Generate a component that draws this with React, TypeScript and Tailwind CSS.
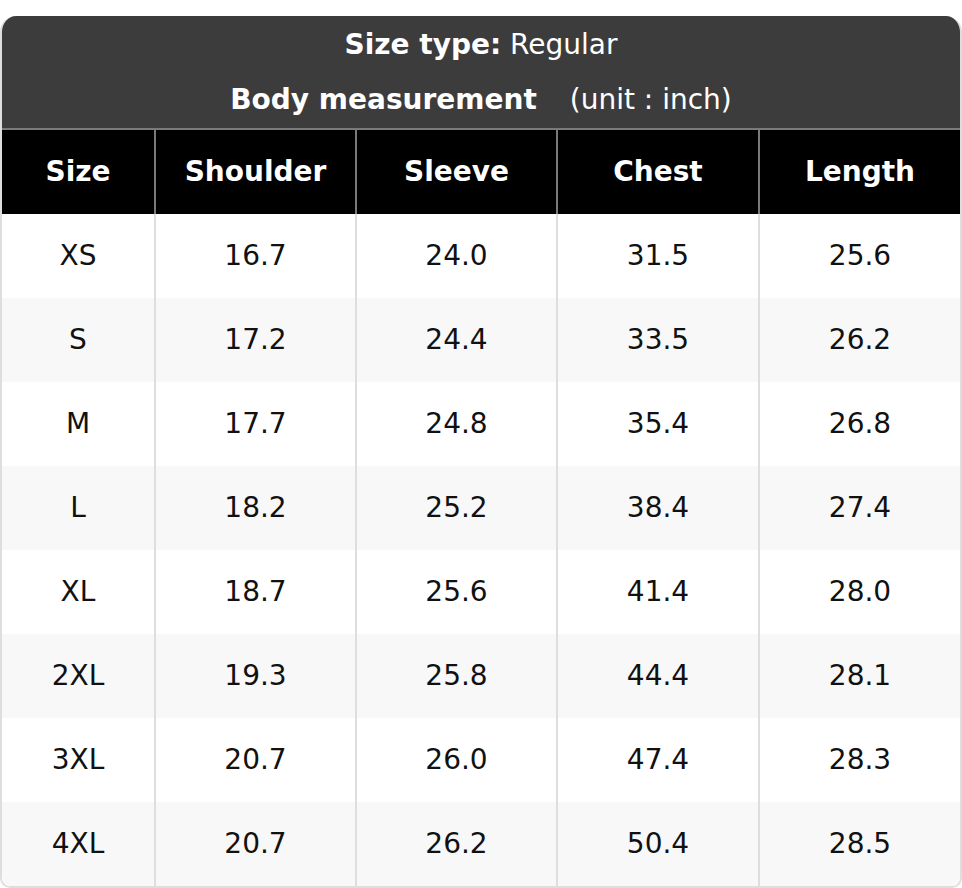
const columns = ['Size', 'Shoulder', 'Sleeve', 'Chest', 'Length'];

const rows = [
  ['XS', '16.7', '24.0', '31.5', '25.6'],
  ['S', '17.2', '24.4', '33.5', '26.2'],
  ['M', '17.7', '24.8', '35.4', '26.8'],
  ['L', '18.2', '25.2', '38.4', '27.4'],
  ['XL', '18.7', '25.6', '41.4', '28.0'],
  ['2XL', '19.3', '25.8', '44.4', '28.1'],
  ['3XL', '20.7', '26.0', '47.4', '28.3'],
  ['4XL', '20.7', '26.2', '50.4', '28.5'],
];

const gridCols = 'grid grid-cols-[152px_201px_201px_202px_1fr]';

export default function App() {
  return (
    <div
      className="w-[962px] h-[888px] bg-white pt-[16px]"
      style={{ fontFamily: '"DejaVu Sans", Verdana, sans-serif' }}
    >
      <div className="rounded-t-[16px] rounded-b-[10px] border-x-2 border-b-2 border-[#dedede] overflow-hidden">
        {/* title block */}
        <div className="h-[114px] bg-[#3c3c3c] border-b-2 border-[#7a7a7a] pt-[11px] text-center text-white text-[28px]">
          <div className="leading-[36px]">
            <span className="font-bold">Size type:</span> Regular
          </div>
          <div className="mt-[19px] leading-[36px]">
            <span className="font-bold">Body measurement</span>
            <span className="ml-[33px]">(unit : inch)</span>
          </div>
        </div>

        {/* column headers */}
        <div className={`${gridCols} h-[84px] bg-black text-white text-[28px] font-bold`}>
          {columns.map((c, i) => (
            <div
              key={c}
              className={`flex items-center justify-center ${i > 0 ? 'border-l-2 border-[#7a7a7a]' : ''}`}
            >
              {c}
            </div>
          ))}
        </div>

        {/* measurements */}
        {rows.map((r, ri) => (
          <div
            key={r[0]}
            className={`${gridCols} h-[84px] text-[28px] text-[#111] ${ri % 2 === 1 ? 'bg-[#f8f8f8]' : 'bg-white'}`}
          >
            {r.map((v, i) => (
              <div
                key={i}
                className={`flex items-center justify-center ${i > 0 ? 'border-l-2 border-[#dedede]' : ''}`}
              >
                {v}
              </div>
            ))}
          </div>
        ))}
      </div>
    </div>
  );
}
